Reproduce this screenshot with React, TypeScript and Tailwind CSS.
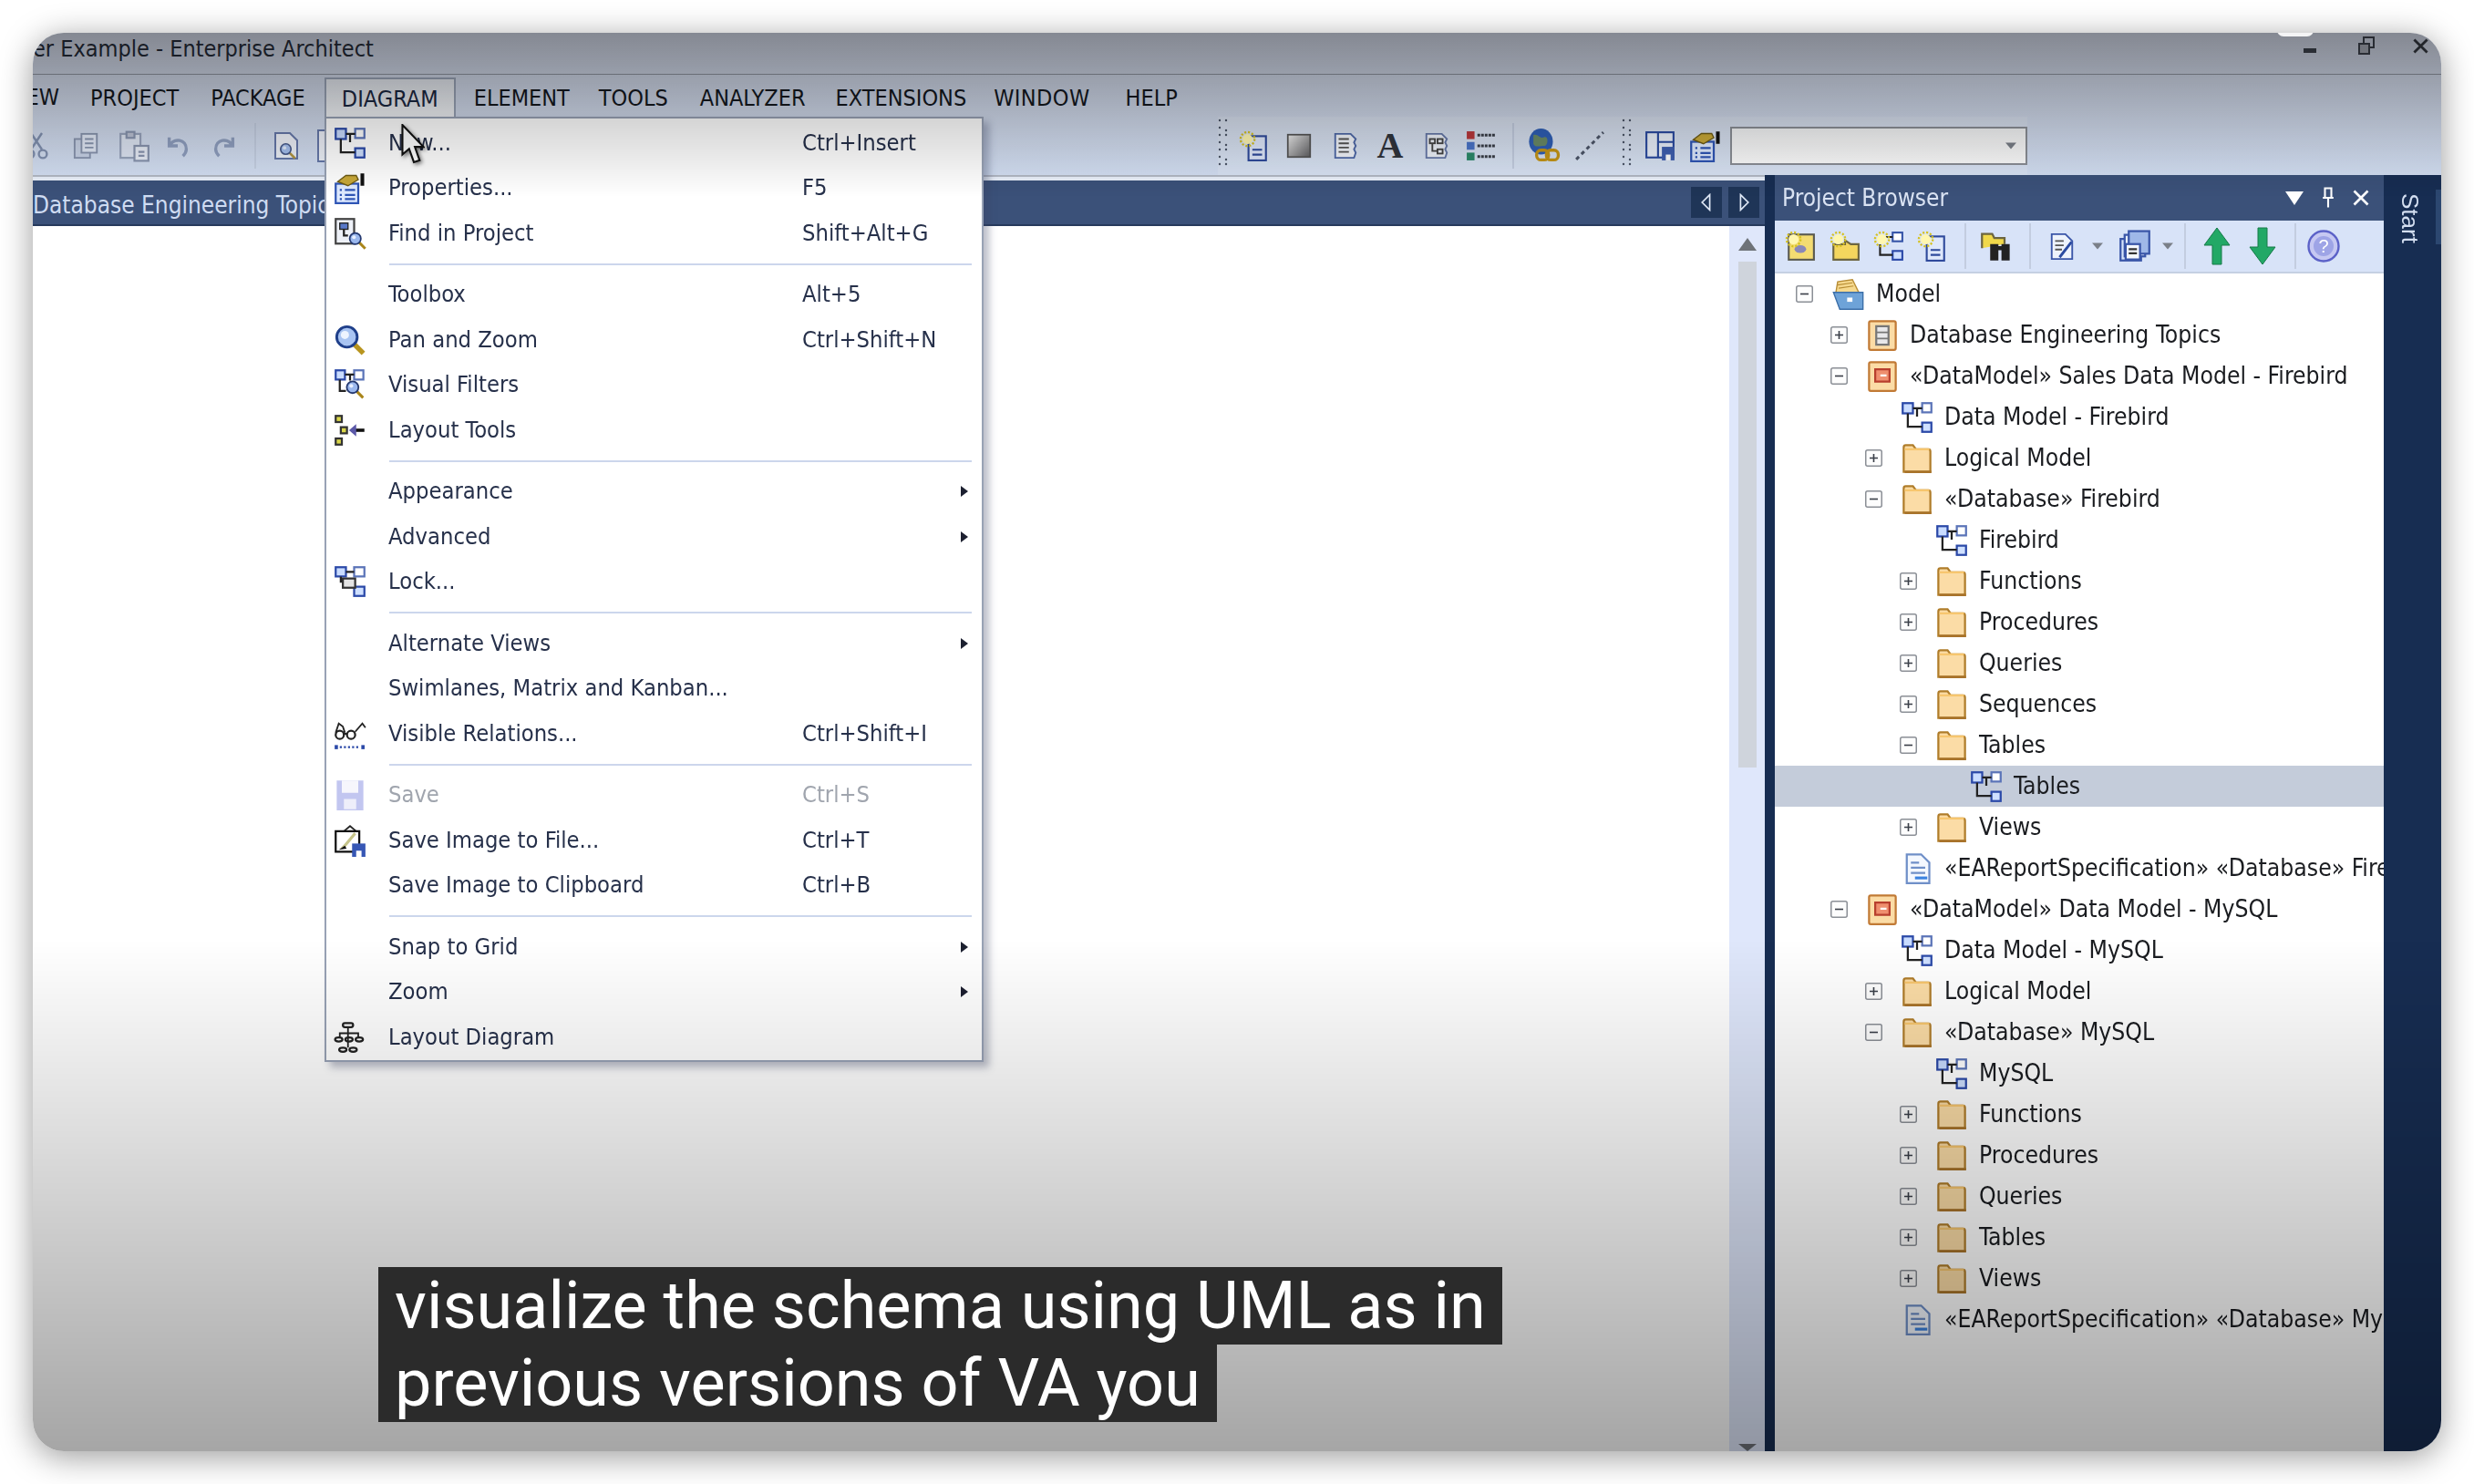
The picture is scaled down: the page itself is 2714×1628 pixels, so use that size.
import type { ReactNode } from "react";

const uiFont = "font-['DejaVu_Sans',sans-serif] [font-stretch:condensed]";

function Svg({ children, className = "w-[36px] h-[36px]" }: { children: ReactNode; className?: string }) {
  return (
    <svg viewBox="0 0 16 16" className={`shrink-0 ${className}`} fill="none">
      {children}
    </svg>
  );
}

const DiagramIcon = () => (
  <Svg>
    <rect x="1" y="1" width="5" height="5" fill="#c9dcff" stroke="#2b49a8" />
    <rect x="10.5" y="1" width="4.5" height="4.5" fill="#fff" stroke="#5b74b8" />
    <rect x="10.5" y="10.5" width="4.5" height="4.5" fill="#cfe0ff" stroke="#2b49a8" />
    <path d="M6 3.5H10.5M8 3.5V7.5M3.5 6V12.5H10.5" stroke="#222" />
  </Svg>
);

const FolderIcon = () => (
  <Svg>
    <path d="M1.5 14.5V2.5q0-1 1-1h3.5l1.5 2h6q1 0 1 1v10z" fill="#fbdca6" stroke="#b07d2a" />
    <path d="M2 3.5H14" stroke="#f7c66e" />
    <path d="M2 14.5H15" stroke="#a8732a" strokeWidth="1.2" />
  </Svg>
);

const PackageIcon = ({ model }: { model?: boolean }) => (
  <Svg>
    <rect x="1.5" y="1" width="13" height="14" rx="0.8" fill="#fbdca6" stroke="#c17a35" />
    {model ? (
      <>
        <rect x="4.5" y="4.5" width="7" height="6" fill="#ef8f6f" stroke="#b83f2e" />
        <path d="M7 7.5h3" stroke="#fff" />
      </>
    ) : (
      <>
        <rect x="5" y="3.5" width="6" height="9" fill="#e8e8ea" stroke="#777" />
        <path d="M5 6.5h6M5 9.5h6" stroke="#777" strokeWidth="0.7" />
      </>
    )}
  </Svg>
);

const ModelIcon = () => (
  <Svg className="w-[37px] h-[40px]">
    <path d="M2 8l1-6 7-1 3 6z" fill="#f6d98e" stroke="#b88d35" strokeWidth="0.6" />
    <path d="M3.5 5l7-1M3 3.5l7-1" stroke="#b88d35" strokeWidth="0.5" />
    <path d="M1 7h14v8H4z" fill="#6ea3d8" stroke="#3c6fa8" strokeWidth="0.6" />
    <rect x="7.5" y="9.5" width="2.5" height="2" fill="#fff" />
  </Svg>
);

const DocIcon = () => (
  <Svg>
    <path d="M3 1h7l4 4v10H3z" fill="#f4f8ff" stroke="#6f8fc8" />
    <path d="M5 5h4M5 7.5h7M5 10h7" stroke="#6f8fc8" />
    <path d="M7 12.5h6" stroke="#3b82e0" strokeWidth="1.4" />
  </Svg>
);

const Magnifier = ({ x = 0, y = 0 }: { x?: number; y?: number }) => (
  <g transform={`translate(${x} ${y})`}>
    <path d="M10 10l4.5 4.5" stroke="#a98519" strokeWidth="2" />
    <circle cx="7" cy="7" r="4.2" fill="#9bb8ee" stroke="#24386f" strokeWidth="1.2" />
    <circle cx="6" cy="6" r="1.4" fill="#e8f0ff" />
  </g>
);

const HandshakeDoc = () => (
  <Svg>
    <rect x="1" y="6" width="11" height="9.5" fill="#dfeaff" stroke="#2f55b5" />
    <path d="M3 9h1M5.5 9h5M3 11.5h1M5.5 11.5h5M3 13.5h1M5.5 13.5h5" stroke="#2f55b5" />
    <path d="M2 5l4-3h5l1 2-5 3z" fill="#c8a838" stroke="#6c5a14" strokeWidth="0.6" />
    <path d="M14 1v6" stroke="#111" strokeWidth="1.8" />
  </Svg>
);

const FindIcon = () => (
  <Svg>
    <rect x="1" y="1" width="9" height="12" fill="#eef1f8" stroke="#444" />
    <rect x="3" y="3" width="4" height="3" fill="#5878c8" stroke="#222" strokeWidth="0.6" />
    <path d="M5 6v3h2" stroke="#222" />
    <g transform="translate(6 6) scale(0.65)">
      <Magnifier />
    </g>
  </Svg>
);

const PanZoomIcon = () => (
  <Svg>
    <path d="M10 10l4.5 4.5" stroke="#b8951f" strokeWidth="2.4" />
    <circle cx="6.5" cy="6.5" r="5" fill="#a9c4f2" stroke="#1f3f8a" strokeWidth="1.3" />
    <circle cx="5.5" cy="5.5" r="2" fill="#eef4ff" />
  </Svg>
);

const VisualFiltersIcon = () => (
  <Svg>
    <rect x="1" y="1" width="4.5" height="4.5" fill="#c9dcff" stroke="#2b49a8" />
    <rect x="10" y="1" width="4.5" height="4.5" fill="#fff" stroke="#5b74b8" />
    <path d="M5.5 3H10M3 5.5V11H6M8 3v3" stroke="#222" />
    <g transform="translate(4.5 4.5) scale(0.68)">
      <Magnifier />
    </g>
  </Svg>
);

const LayoutToolsIcon = () => (
  <Svg>
    <rect x="1" y="1" width="3" height="3" fill="#d9d64a" stroke="#333" />
    <rect x="3.5" y="6.5" width="3" height="3" fill="#d9d64a" stroke="#333" />
    <rect x="1" y="12" width="3" height="3" fill="#d9d64a" stroke="#333" />
    <path d="M15 8H10" stroke="#111" strokeWidth="1.6" />
    <path d="M7.5 8l3.5-3v6z" fill="#5b58a8" />
  </Svg>
);

const LockIcon = () => (
  <Svg>
    <rect x="1" y="1" width="5" height="4.5" fill="#c9dcff" stroke="#2b49a8" />
    <rect x="10" y="1" width="5" height="4.5" fill="#fff" stroke="#5b74b8" />
    <rect x="10" y="10.5" width="5" height="4.5" fill="#cfe0ff" stroke="#2b49a8" />
    <rect x="4.5" y="6.5" width="6" height="4.5" fill="#e4e4e4" stroke="#333" />
    <path d="M6 3.3h4M3.5 5.5v3" stroke="#222" />
  </Svg>
);

const GlassesIcon = () => (
  <Svg>
    <circle cx="3" cy="8.5" r="2" stroke="#222" />
    <circle cx="8.5" cy="8.5" r="2" stroke="#222" />
    <path d="M5 8h1.5M1 7.5L2.5 3l2 1.5 1 3M10.5 7L14 3l1.5 2" stroke="#222" strokeWidth="0.8" />
    <path d="M3 14.5h9" stroke="#2b49a8" strokeDasharray="1 1" />
    <rect x="0.5" y="13.5" width="1.6" height="2" fill="#2b49a8" />
    <rect x="13.5" y="13.5" width="1.6" height="2" fill="#2b49a8" />
  </Svg>
);

const SaveDisabledIcon = () => (
  <Svg>
    <path d="M1.5 1h13v14.5h-13z" fill="#c2c6f0" />
    <rect x="4" y="1" width="8" height="6" fill="#f6f6fc" />
    <rect x="5" y="10" width="6" height="5" fill="#eeeefa" />
  </Svg>
);

const SaveImageIcon = () => (
  <Svg>
    <path d="M5 3.5L8 1l3 2.5" stroke="#222" strokeWidth="0.8" />
    <rect x="1" y="3.5" width="11.5" height="10" fill="#fff" stroke="#111" />
    <path d="M3 12l2-2 5-6 1 1-5 6z" fill="#c6c48a" />
    <path d="M2.5 12.5l3-2 .8 1.5z" fill="#111" />
    <rect x="9" y="9.5" width="6.5" height="6.5" fill="#3757b5" />
    <rect x="11" y="13" width="2.6" height="3" fill="#fff" />
  </Svg>
);

const LayoutDiagramIcon = () => (
  <Svg>
    <rect x="4.5" y="1" width="5" height="2" rx="1" stroke="#222" />
    <path d="M7 3v3M3 8V6h9v2M7 6v7" stroke="#222" strokeWidth="0.8" />
    <ellipse cx="2.5" cy="9" rx="1.8" ry="1" stroke="#222" />
    <ellipse cx="7.5" cy="9" rx="1.8" ry="1" stroke="#222" />
    <ellipse cx="12.5" cy="9" rx="1.8" ry="1" stroke="#222" />
    <ellipse cx="4.5" cy="14" rx="1.8" ry="1" stroke="#222" />
    <ellipse cx="9.5" cy="14" rx="1.8" ry="1" stroke="#222" />
  </Svg>
);

const Star = () => (
  <g>
    <circle cx="4.5" cy="4.5" r="2.6" fill="#fff7b0" />
    <circle cx="4.5" cy="4.5" r="3.6" stroke="#d6c21e" strokeWidth="1.1" strokeDasharray="1 0.9" />
  </g>
);

const NewElementIcon = () => (
  <Svg className="w-[34px] h-[34px]">
    <rect x="5" y="3" width="9" height="12.5" fill="#dfe8fb" stroke="#2f4a9c" />
    <path d="M7 10h5M7 12.5h5" stroke="#2f4a9c" />
    <Star />
  </Svg>
);

const NewModelIcon = () => (
  <Svg className="w-[34px] h-[34px]">
    <rect x="2" y="2" width="13" height="13" fill="#f4dc72" stroke="#5a5a50" />
    <ellipse cx="8" cy="9.5" rx="3" ry="2" fill="#8a88b8" />
    <Star />
  </Svg>
);

const NewFolderIcon = () => (
  <Svg className="w-[34px] h-[34px]">
    <path d="M2 15V7h6V5l3 2h4v8z" fill="#f4d65e" stroke="#6c6540" />
    <Star />
  </Svg>
);

const NewDiagramIcon = () => (
  <Svg className="w-[34px] h-[34px]">
    <rect x="10" y="1" width="5" height="4.5" fill="#fff" stroke="#3554a8" />
    <rect x="10" y="10.5" width="5" height="4.5" fill="#cfe0ff" stroke="#2b49a8" />
    <path d="M6 3.3h4M3.5 7v5.5H10" stroke="#222" />
    <Star />
  </Svg>
);

const ChevronDrop = () => (
  <svg viewBox="0 0 10 6" className="w-[12px] h-[8px] shrink-0">
    <path d="M0 0h10L5 6z" fill="#7a7f88" />
  </svg>
);

const Sep = () => <div className="w-[2px] h-[50px] bg-[#c3cde0] shrink-0" />;

const Gripper = () => (
  <svg viewBox="0 0 12 64" className="w-[12px] h-[64px] shrink-0">
    {[4, 12, 20, 28, 36, 44, 52].map((y, i) => (
      <g key={y} fill="#4c5568">
        <circle cx="2" cy={y} r="1.2" />
        <circle cx="9" cy={y + (i % 2 ? 3 : 0)} r="1.2" />
      </g>
    ))}
  </svg>
);

const menuBarItems = ["PROJECT", "PACKAGE", "DIAGRAM", "ELEMENT", "TOOLS", "ANALYZER", "EXTENSIONS", "WINDOW", "HELP"];

const menuBarClass = (item: string) => {
  if (item === "DIAGRAM")
    return "h-[43px] w-[144px] ml-[3px] shrink-0 pt-[2px] flex items-center justify-center border-x-2 border-t-2 border-[#99a3b6] bg-gradient-to-b from-[#e3e7ee] to-[#f1f3f6] text-[#1b2740]";
  if (item === "ELEMENT") return "h-[43px] pl-[20px] pr-[15px] pt-[2px] flex items-center";
  if (item === "WINDOW") return "h-[43px] pl-[15px] pr-[22px] pt-[2px] flex items-center tracking-[0.4px]";
  if (item === "EXTENSIONS") return "h-[43px] pl-[15px] pr-[15px] pt-[2px] flex items-center";
  return "h-[43px] pl-[17px] pr-[18px] pt-[2px] flex items-center";
};

type MenuRow = { icon?: ReactNode; label: string; shortcut?: string; sub?: boolean; disabled?: boolean };

const menuGroups: MenuRow[][] = [
  [
    { icon: <DiagramIcon />, label: "New...", shortcut: "Ctrl+Insert" },
    { icon: <HandshakeDoc />, label: "Properties...", shortcut: "F5" },
    { icon: <FindIcon />, label: "Find in Project", shortcut: "Shift+Alt+G" },
  ],
  [
    { label: "Toolbox", shortcut: "Alt+5" },
    { icon: <PanZoomIcon />, label: "Pan and Zoom", shortcut: "Ctrl+Shift+N" },
    { icon: <VisualFiltersIcon />, label: "Visual Filters" },
    { icon: <LayoutToolsIcon />, label: "Layout Tools" },
  ],
  [
    { label: "Appearance", sub: true },
    { label: "Advanced", sub: true },
    { icon: <LockIcon />, label: "Lock..." },
  ],
  [
    { label: "Alternate Views", sub: true },
    { label: "Swimlanes, Matrix and Kanban..." },
    { icon: <GlassesIcon />, label: "Visible Relations...", shortcut: "Ctrl+Shift+I" },
  ],
  [
    { icon: <SaveDisabledIcon />, label: "Save", shortcut: "Ctrl+S", disabled: true },
    { icon: <SaveImageIcon />, label: "Save Image to File...", shortcut: "Ctrl+T" },
    { label: "Save Image to Clipboard", shortcut: "Ctrl+B" },
  ],
  [
    { label: "Snap to Grid", sub: true },
    { label: "Zoom", sub: true },
    { icon: <LayoutDiagramIcon />, label: "Layout Diagram" },
  ],
];

type TreeRow = {
  level: number;
  exp?: "+" | "-";
  icon: "model" | "pkg" | "dm" | "diagram" | "folder" | "doc";
  text: string;
  selected?: boolean;
};

const treeRows: TreeRow[] = [
  { level: 0, exp: "-", icon: "model", text: "Model" },
  { level: 1, exp: "+", icon: "pkg", text: "Database Engineering Topics" },
  { level: 1, exp: "-", icon: "dm", text: "«DataModel» Sales Data Model - Firebird" },
  { level: 2, icon: "diagram", text: "Data Model - Firebird" },
  { level: 2, exp: "+", icon: "folder", text: "Logical Model" },
  { level: 2, exp: "-", icon: "folder", text: "«Database» Firebird" },
  { level: 3, icon: "diagram", text: "Firebird" },
  { level: 3, exp: "+", icon: "folder", text: "Functions" },
  { level: 3, exp: "+", icon: "folder", text: "Procedures" },
  { level: 3, exp: "+", icon: "folder", text: "Queries" },
  { level: 3, exp: "+", icon: "folder", text: "Sequences" },
  { level: 3, exp: "-", icon: "folder", text: "Tables" },
  { level: 4, icon: "diagram", text: "Tables", selected: true },
  { level: 3, exp: "+", icon: "folder", text: "Views" },
  { level: 2, icon: "doc", text: "«EAReportSpecification» «Database» Firebird" },
  { level: 1, exp: "-", icon: "dm", text: "«DataModel» Data Model - MySQL" },
  { level: 2, icon: "diagram", text: "Data Model - MySQL" },
  { level: 2, exp: "+", icon: "folder", text: "Logical Model" },
  { level: 2, exp: "-", icon: "folder", text: "«Database» MySQL" },
  { level: 3, icon: "diagram", text: "MySQL" },
  { level: 3, exp: "+", icon: "folder", text: "Functions" },
  { level: 3, exp: "+", icon: "folder", text: "Procedures" },
  { level: 3, exp: "+", icon: "folder", text: "Queries" },
  { level: 3, exp: "+", icon: "folder", text: "Tables" },
  { level: 3, exp: "+", icon: "folder", text: "Views" },
  { level: 2, icon: "doc", text: "«EAReportSpecification» «Database» MySQL" },
];

const levelPadding = ["pl-[23px]", "pl-[61px]", "pl-[99px]", "pl-[137px]", "pl-[175px]"];

function Expander({ kind }: { kind?: "+" | "-" }) {
  if (!kind) return <div className="w-[19px] shrink-0" />;
  return (
    <svg viewBox="0 0 19 19" className="w-[19px] h-[19px] shrink-0">
      <rect x="0.75" y="0.75" width="17.5" height="17.5" rx="2" fill="#fdfdfd" stroke="#8b8f96" strokeWidth="1.5" />
      <path d={kind === "+" ? "M5 9.5h9M9.5 5v9" : "M5 9.5h9"} stroke="#3a3f48" strokeWidth="1.6" />
    </svg>
  );
}

function TreeIcon({ kind }: { kind: TreeRow["icon"] }) {
  if (kind === "model") return <ModelIcon />;
  if (kind === "pkg") return <PackageIcon />;
  if (kind === "dm") return <PackageIcon model />;
  if (kind === "diagram") return <DiagramIcon />;
  if (kind === "doc") return <DocIcon />;
  return <FolderIcon />;
}

export default function App() {
  return (
    <div className="w-[2714px] h-[1628px] bg-white pt-[36px] pl-[36px] overflow-hidden">
      <div className="relative w-[2642px] h-[1556px] rounded-[34px] overflow-hidden bg-white shadow-[0_6px_36px_rgba(0,0,0,0.4)]">
        <div className={`flex flex-col h-full blur-[0.5px] ${uiFont}`}>
          {/* title, menu and toolbars */}
          <div className="h-[156px] shrink-0 bg-gradient-to-b from-[#cdd3e2] to-[#d3dff3]">
            <div className="h-[46px] flex items-start justify-between border-b border-[#8f949f] text-[25px] leading-[36px] text-[#252b38]">
              <span className="whitespace-nowrap">er Example - Enterprise Architect</span>
              <div className="flex items-start pr-[14px] text-[#33373f]">
                <div className="w-[14px] h-[5px] bg-[#3d424c] mt-[17px]" />
                <div className="relative w-[18px] h-[20px] mt-[4px] ml-[46px]">
                  <div className="absolute right-0 top-0 w-[13px] h-[13px] border-[2px] border-[#3d424c]" />
                  <div className="absolute left-0 bottom-0 w-[13px] h-[13px] border-[2px] border-[#3d424c] bg-[#a5a9b4]" />
                </div>
                <svg viewBox="0 0 12 12" className="w-[17px] h-[17px] mt-[6px] ml-[42px]">
                  <path d="M1 1l10 10M11 1L1 11" stroke="#33373f" strokeWidth="2" />
                </svg>
              </div>
            </div>
            <div className="h-[46px] flex items-end text-[25px] text-[#14181f]">
              <div className="w-[46px] h-full shrink-0 flex items-center justify-end pr-[17px] pt-[3px] overflow-hidden">
                <span>VIEW</span>
              </div>
              {menuBarItems.map((item) => (
                <div key={item} className={menuBarClass(item)}>
                  {item}
                </div>
              ))}
            </div>
            <div className="h-[64px] flex items-center justify-between pr-[454px]">
              <div className="flex items-center -ml-[12px] opacity-80">
                <Svg className="w-[32px] h-[40px]">
                  <path d="M5 1l6 9M11 1L5 10" stroke="#6d7ea0" strokeWidth="1.2" />
                  <circle cx="4.5" cy="12.5" r="2.2" stroke="#6d7ea0" strokeWidth="1.2" />
                  <circle cx="11.5" cy="12.5" r="2.2" stroke="#6d7ea0" strokeWidth="1.2" />
                </Svg>
                <Svg className="w-[30px] h-[40px] ml-[24px]">
                  <rect x="1" y="4" width="9" height="11" fill="#c8d2e6" stroke="#7784a0" />
                  <rect x="5" y="1" width="9" height="11" fill="#e6ecf8" stroke="#7784a0" />
                  <path d="M7 4h5M7 6.5h5M7 9h5" stroke="#7784a0" />
                </Svg>
                <Svg className="w-[35px] h-[44px] ml-[20px]">
                  <rect x="1" y="2" width="10" height="12" fill="#e2e8f4" stroke="#8a96b0" />
                  <rect x="4" y="1" width="4" height="3" fill="#b7bed0" stroke="#7784a0" />
                  <rect x="8" y="8" width="7" height="7.5" fill="#eef2fa" stroke="#7784a0" />
                  <path d="M10 11h3M10 13h3" stroke="#7784a0" />
                </Svg>
                <Svg className="w-[30px] h-[36px] ml-[15px]">
                  <path d="M3 3v5h5M3 8c3-5 10-4 10 2 0 2-1 3-2 4" stroke="#7f90b4" strokeWidth="1.8" />
                </Svg>
                <Svg className="w-[30px] h-[36px] ml-[21px]">
                  <path d="M13 3v5H8M13 8c-3-5-10-4-10 2 0 2 1 3 2 4" stroke="#7f90b4" strokeWidth="1.8" />
                </Svg>
                <div className="ml-[18px]"><Sep /></div>
                <Svg className="w-[32px] h-[46px] ml-[17px]">
                  <path d="M2 1h8l4 4v10H2z" fill="#f4f6fb" stroke="#4c6098" />
                  <g transform="translate(3 5) scale(0.68)">
                    <Magnifier />
                  </g>
                </Svg>
                <div className="w-[20px] h-[36px] ml-[18px] border-2 border-[#4c6098] bg-[#f4f6fb]" />
              </div>
              <div className="flex items-center h-full w-[888px] bg-white/15">
                <Gripper />
                <div className="ml-[11px]"><NewElementIcon /></div>
                <Svg className="w-[28px] h-[30px] ml-[18px]">
                  <defs>
                    <linearGradient id="shade" x1="0" y1="0" x2="1" y2="1">
                      <stop offset="0" stopColor="#f2f2f2" />
                      <stop offset="1" stopColor="#5d5d60" />
                    </linearGradient>
                  </defs>
                  <rect x="1" y="1" width="14" height="14" fill="url(#shade)" stroke="#555" />
                </Svg>
                <Svg className="w-[30px] h-[34px] ml-[22px]">
                  <path d="M2 1h9l3 3-1 2 1 2-1 2 1 2-1 3H2z" fill="#f2f5fb" stroke="#4f69a8" />
                  <path d="M4 4h6M4 6.5h6M4 9h6M4 11.5h6" stroke="#555" />
                </Svg>
                <span className="ml-[18px] w-[32px] text-center font-['Liberation_Serif',serif] font-bold text-[40px] leading-none text-[#30343c]">
                  A
                </span>
                <Svg className="w-[30px] h-[34px] ml-[20px]">
                  <path d="M2 1h9l3 3-1 2 1 2-1 2 1 2-1 3H2z" fill="#eef2fa" stroke="#6678a8" />
                  <rect x="4" y="4" width="3" height="2.5" stroke="#444" />
                  <rect x="8.5" y="4" width="3" height="2.5" stroke="#444" />
                  <rect x="8.5" y="10" width="3" height="2.5" stroke="#444" />
                  <path d="M5.5 6.5V11H8.5" stroke="#444" />
                </Svg>
                <Svg className="w-[34px] h-[36px] ml-[17px]">
                  <rect x="0.5" y="0.5" width="4" height="4" fill="#b9383c" />
                  <rect x="0.5" y="6" width="4" height="4" fill="#4a74c8" />
                  <rect x="0.5" y="11.5" width="4" height="4" fill="#2d8a6a" />
                  <path d="M6 2.5h9M6 8h9M6 13.5h9" stroke="#3a3f48" strokeWidth="1.4" strokeDasharray="1.4 0.5" />
                </Svg>
                <div className="w-[2px] h-[50px] bg-[#c3cde0] ml-[17px]" />
                <Svg className="w-[38px] h-[40px] ml-[14px]">
                  <ellipse cx="6.5" cy="6" rx="5.5" ry="6" fill="#2f5fb5" />
                  <path d="M3 3c2-1 3 2 5 1s2 4 0 4-4 1-5-1z" fill="#6a8a66" />
                  <rect x="4.5" y="10" width="5.5" height="4.5" rx="2" stroke="#c59515" strokeWidth="1.4" />
                  <rect x="9" y="10" width="5.5" height="4.5" rx="2" stroke="#c59515" strokeWidth="1.4" />
                </Svg>
                <Svg className="w-[34px] h-[40px] ml-[14px]">
                  <path d="M1 15L15 1" stroke="#4c5568" strokeWidth="1.4" strokeDasharray="2 1.8" />
                </Svg>
                <div className="ml-[18px]"><Gripper /></div>
                <Svg className="w-[34px] h-[40px] ml-[13px]">
                  <rect x="1" y="1" width="14" height="13" fill="#eaf0fb" stroke="#2a4aa0" />
                  <path d="M7 1v13M7 6h8" stroke="#2a4aa0" />
                  <rect x="9" y="8.5" width="6.5" height="7" fill="#3f5fb0" />
                  <rect x="11" y="12.5" width="2.5" height="3" fill="#fff" />
                </Svg>
                <div className="ml-[15px]"><HandshakeDoc /></div>
                <div className="ml-[9px] flex-1 h-[42px] border-2 border-[#8b8f96] bg-gradient-to-b from-[#f4f5f6] to-[#fcfcfc] flex items-center justify-end pr-[10px]">
                  <ChevronDrop />
                </div>
              </div>
            </div>
          </div>

          {/* main area */}
          <div className="flex-1 flex min-h-0">
            <div className="w-[1900px] shrink-0 flex flex-col">
              <div className="h-[6px] bg-[#eaf0fa] border-t-2 border-[#b3b9c5]" />
              <div className="h-[50px] shrink-0 flex items-center justify-between pr-[6px] pt-[6px] bg-[#3b5179] border-b-2 border-[#273a5c] text-[26px] text-[#cfdcf2]">
                <span className="whitespace-nowrap">Database Engineering Topics</span>
                <div className="flex gap-[7px] -mt-[6px]">
                  <div className="w-[34px] h-[34px] bg-[#1f3557] flex items-center justify-center">
                    <svg viewBox="0 0 10 16" className="w-[12px] h-[20px]">
                      <path d="M8 1v14L1 8z" stroke="#dfe8f6" strokeWidth="1.4" fill="none" />
                    </svg>
                  </div>
                  <div className="w-[34px] h-[34px] bg-[#1f3557] flex items-center justify-center">
                    <svg viewBox="0 0 10 16" className="w-[12px] h-[20px]">
                      <path d="M2 1v14l7-7z" stroke="#dfe8f6" strokeWidth="1.4" fill="none" />
                    </svg>
                  </div>
                </div>
              </div>
              <div className="flex-1 flex justify-end bg-white">
                <div className="w-[39px] h-full bg-[#dfe7fb] flex flex-col items-center relative">
                  <svg viewBox="0 0 20 14" className="w-[20px] h-[14px] mt-[13px]">
                    <path d="M10 0l10 14H0z" fill="#6e7278" />
                  </svg>
                  <div className="w-[20px] h-[555px] bg-[#cfd4dc] mt-[12px]" />
                  <svg viewBox="0 0 20 8" className="w-[20px] h-[8px] absolute bottom-0">
                    <path d="M0 0h20L10 8z" fill="#6e7278" />
                  </svg>
                </div>
              </div>
            </div>

            <div className="w-[11px] shrink-0 bg-[#172d52]" />

            <div className="w-[668px] shrink-0 flex flex-col bg-white">
              <div className="h-[50px] shrink-0 bg-[#3b5179] flex items-center justify-between text-[26px] text-[#dae3f3] pl-[8px] pr-[16px]">
                <span>Project Browser</span>
                <div className="flex items-center gap-[20px]">
                  <svg viewBox="0 0 16 12" className="w-[20px] h-[15px]">
                    <path d="M0 0h16L8 12z" fill="#fff" />
                  </svg>
                  <svg viewBox="0 0 12 20" className="w-[14px] h-[24px]">
                    <path d="M3 1h6v9H3zM1 10h10M6 10v9" stroke="#fff" strokeWidth="1.8" fill="none" />
                  </svg>
                  <svg viewBox="0 0 12 12" className="w-[18px] h-[18px]">
                    <path d="M1 1l10 10M11 1L1 11" stroke="#fff" strokeWidth="1.8" />
                  </svg>
                </div>
              </div>
              <div className="h-[58px] shrink-0 bg-[#d8e3f8] border-b-2 border-[#c5d0e2] flex items-center pl-[11px]">
                <NewModelIcon />
                <div className="ml-[15px]"><NewFolderIcon /></div>
                <div className="ml-[14px]"><NewDiagramIcon /></div>
                <div className="ml-[14px]"><NewElementIcon /></div>
                <div className="ml-[18px] w-[2px] h-[50px] bg-[#c3cde0]" />
                <Svg className="w-[36px] h-[38px] ml-[15px]">
                  <path d="M1 9V2h5l1 2h5v3" fill="#f0d84a" stroke="#6c6540" />
                  <rect x="5" y="7" width="4" height="8" fill="#222" />
                  <rect x="10.5" y="7" width="4" height="8" fill="#222" />
                  <path d="M8 9h3" stroke="#222" strokeWidth="2" />
                </Svg>
                <div className="ml-[18px] w-[2px] h-[50px] bg-[#c3cde0]" />
                <Svg className="w-[30px] h-[42px] ml-[19px]">
                  <path d="M2 1h8l4 4v10.5H2z" fill="#eef3fc" stroke="#3a56a8" />
                  <path d="M4 5h5M4 7.5h5M4 10h4" stroke="#555" />
                  <path d="M6 14l7-9 1.2 1-7 9z" fill="#2a4aa0" />
                </Svg>
                <div className="ml-[18px]"><ChevronDrop /></div>
                <Svg className="w-[36px] h-[40px] ml-[17px]">
                  <rect x="1" y="4.5" width="10" height="10.5" fill="#d7e4fb" stroke="#3a56a8" />
                  <rect x="3" y="2.5" width="10" height="10.5" fill="#e6eefd" stroke="#3a56a8" />
                  <rect x="5" y="0.7" width="10" height="11" fill="#9fb8e8" stroke="#3a56a8" />
                  <rect x="3.5" y="7" width="7" height="7.5" fill="#f4f7fd" stroke="#3a56a8" />
                  <path d="M5 9.5h4M5 11.5h4" stroke="#333" />
                </Svg>
                <div className="ml-[12px]"><ChevronDrop /></div>
                <div className="ml-[12px] w-[2px] h-[50px] bg-[#c3cde0]" />
                <svg viewBox="0 0 30 42" className="w-[30px] h-[42px] ml-[19px]">
                  <path d="M15 1L29 20H20V41H10V20H1z" fill="#22a866" stroke="#167a48" />
                </svg>
                <svg viewBox="0 0 30 42" className="w-[30px] h-[42px] ml-[20px]">
                  <path d="M15 41L29 22H20V1H10V22H1z" fill="#22a866" stroke="#167a48" />
                </svg>
                <div className="ml-[20px] w-[2px] h-[50px] bg-[#c3cde0]" />
                <svg viewBox="0 0 36 36" className="w-[36px] h-[36px] ml-[12px]">
                  <circle cx="18" cy="18" r="16.5" fill="#c6c8f2" stroke="#5c62c8" strokeWidth="2.4" />
                  <circle cx="18" cy="18" r="11" fill="#9ea4e6" />
                  <text x="18" y="25" textAnchor="middle" fontSize="20" fill="#fff" fontFamily="Liberation Sans">?</text>
                </svg>
              </div>
              <div className="flex-1 overflow-hidden">
                {treeRows.map((row, i) => (
                  <div
                    key={i}
                    className={`h-[45px] flex items-center whitespace-nowrap text-[26.3px] text-[#1a1c20] ${levelPadding[row.level]} ${
                      row.selected ? "bg-[#c4ccda]" : ""
                    }`}
                  >
                    <Expander kind={row.exp} />
                    <div className="ml-[20px]">
                      <TreeIcon kind={row.icon} />
                    </div>
                    <span className="ml-[12px] pt-[1px]">{row.text}</span>
                  </div>
                ))}
              </div>
            </div>

            <div className="flex-1 relative bg-[#172d52]">
              <span className="absolute left-[9px] top-[20px] [writing-mode:vertical-rl] font-['Liberation_Sans',sans-serif] text-[26px] text-[#d3def0]">
                Start
              </span>
              <div className="absolute right-0 top-[16px] w-[6px] h-[60px] bg-[#2c4770]" />
            </div>
          </div>
        </div>

        {/* DIAGRAM dropdown */}
        <div className={`absolute left-[320px] top-[92px] w-[723px] h-[1037px] border-2 border-[#98a2b5] bg-white py-[2px] shadow-[6px_6px_8px_rgba(60,70,100,0.35)] text-[25.3px] text-[#26304a] blur-[0.5px] ${uiFont}`}>
          {menuGroups.map((group, gi) => (
            <div key={gi}>
              {gi > 0 && <div className="h-[2px] bg-[#ccd6ec] ml-[69px] mr-[11px] my-[8px]" />}
              {group.map((row) => (
                <div key={row.label} className={`h-[49.5px] flex items-center pl-[8px] ${row.disabled ? "text-[#a0a5ae]" : ""}`}>
                  <div className="w-[36px] h-[36px] mr-[24px] shrink-0">{row.icon}</div>
                  <span className="w-[454px] shrink-0 whitespace-nowrap">{row.label}</span>
                  <span className="w-[174px] shrink-0 whitespace-nowrap">{row.shortcut}</span>
                  {row.sub && (
                    <svg viewBox="0 0 8 12" className="w-[8px] h-[12px]">
                      <path d="M0 0l8 6-8 6z" fill="#1c2030" />
                    </svg>
                  )}
                </div>
              ))}
            </div>
          ))}
        </div>

        {/* mouse pointer */}
        <svg viewBox="0 0 24 42" className="absolute left-[404px] top-[100px] w-[26px] h-[44px] drop-shadow-[2px_2px_2px_rgba(0,0,0,0.5)]">
          <path d="M1 1v31l7-6 5 14 6-2-5-14h9z" fill="#fff" stroke="#111" strokeWidth="2" />
        </svg>

        {/* video shading */}
        <div className="absolute inset-x-0 top-0 h-[180px] bg-gradient-to-b from-black/35 to-transparent pointer-events-none" />
        <div className="absolute inset-x-0 bottom-0 h-[562px] bg-gradient-to-t from-black/35 to-transparent pointer-events-none" />
        <div className="absolute left-[2462px] -top-[10px] w-[40px] h-[14px] rounded-full bg-white/90" />

        {/* caption */}
        <div className="absolute left-[379px] top-[1354px] w-[1300px] font-['Roboto',sans-serif] text-[72px] leading-[85px] text-white">
          <div>
            <span className="inline-block bg-[#2b2b2b] px-[18px] whitespace-nowrap">visualize the schema using UML as in</span>
          </div>
          <div>
            <span className="inline-block bg-[#2b2b2b] px-[18px] whitespace-nowrap">previous versions of VA you</span>
          </div>
        </div>
      </div>
    </div>
  );
}
